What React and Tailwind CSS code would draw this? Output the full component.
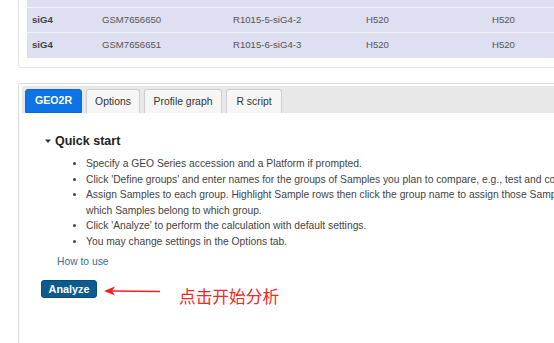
import React from 'react'

const rows = [
  ['siG4', 'GSM7656650', 'R1015-5-siG4-2', 'H520', 'H520'],
  ['siG4', 'GSM7656651', 'R1015-6-siG4-3', 'H520', 'H520'],
]

const tabs = [
  { label: 'Options', w: 'w-[54px]' },
  { label: 'Profile graph', w: 'w-[78px]' },
  { label: 'R script', w: 'w-[56px]' },
]

export default function App() {
  return (
    <div
      className="w-[554px] h-[343px] overflow-hidden bg-white"
      style={{ fontFamily: '"Liberation Sans", Arial, sans-serif' }}
    >
      {/* Sample table card */}
      <div className="ml-[18px] w-[560px] mt-[-4px] border border-[#e2e2e2] rounded-[3px] pl-[8px] pb-[9px] bg-white">
        <div className="w-[560px] bg-[#dfdff2]">
          <div className="h-[11px] border-b border-[#f3f3fb]" />
          {rows.map((r, i) => (
            <div
              key={i}
              className={`flex items-center h-[25px] text-[9.6px] text-[#555] ${i === 0 ? 'border-b border-[#f3f3fb]' : ''}`}
            >
              <span className="w-[75px] pl-[5px] font-bold text-[#444]">{r[0]}</span>
              <span className="w-[131px]">{r[1]}</span>
              <span className="w-[133px]">{r[2]}</span>
              <span className="w-[126px]">{r[3]}</span>
              <span>{r[4]}</span>
            </div>
          ))}
        </div>
      </div>

      {/* GEO2R panel */}
      <div className="ml-[18px] mt-[15px] w-[560px] h-[300px] border border-[#dcdcdc] rounded-[3px] pt-[2px] pl-[3px]">
        <div className="flex items-end gap-[4px] h-[27px] bg-[#e8e8e8] pl-[3px] rounded-tl-[2px]">
          <div className="h-[24px] w-[57px] flex items-center justify-center bg-[#0c74e4] border border-[#0c6ad0] rounded-t-[3px] text-white font-bold text-[10.6px]">
            GEO2R
          </div>
          {tabs.map((t) => (
            <div
              key={t.label}
              className={`h-[24px] ${t.w} flex items-center justify-center bg-[#f6f6f6] border border-[#cfcfcf] border-b-0 rounded-t-[3px] text-[#333] text-[10.4px]`}
            >
              {t.label}
            </div>
          ))}
        </div>

        <div className="pl-[22px] pt-[19px]">
          <div className="flex items-center gap-[4px] h-[18px] leading-[18px] text-[12.5px] font-bold text-[#222]">
            <svg width="6" height="6" viewBox="0 0 6 6" className="ml-[1px]">
              <polygon points="0,1.5 6,1.5 3,5" fill="#333" />
            </svg>
            Quick start
          </div>
          <ul className="mt-[6px] pl-[42px] text-[10.3px] leading-[15.5px] text-[#444] list-disc whitespace-nowrap">
            <li>Specify a GEO Series accession and a Platform if prompted.</li>
            <li>
              Click 'Define groups' and enter names for the groups of Samples you plan to compare, e.g., test and control.
            </li>
            <li>
              Assign Samples to each group. Highlight Sample rows then click the group name to assign those Samples to the group. Use the Columns menu to display Sample characteristics that help identify
              <br />
              which Samples belong to which group.
            </li>
            <li>Click 'Analyze' to perform the calculation with default settings.</li>
            <li>You may change settings in the Options tab.</li>
          </ul>
          <div className="mt-[6px] pl-[13px] h-[14px] leading-[14px] text-[10.3px] text-[#3d6a99]">
            How to use
          </div>
          <div className="mt-[11px] ml-[-3px] flex items-start">
            <button className="h-[18px] w-[56px] bg-[#0d5b8f] border border-[#0a4c78] rounded-[3px] text-white font-bold text-[10.8px] leading-none">
              Analyze
            </button>
            <svg width="60" height="12" viewBox="0 0 60 12" className="ml-[7px] mt-[5px]">
              <line x1="8" y1="6" x2="56" y2="6.5" stroke="#f02020" strokeWidth="1.5" />
              <polygon points="0,6 11,1.5 8,6 11,10.5" fill="#f02020" />
            </svg>
            <span
              className="ml-[15px] mt-[4px] h-[24px] leading-[24px] text-[16.7px] text-[#ee2a24]"
              style={{ fontFamily: '"Noto Sans CJK SC", sans-serif' }}
            >
              点击开始分析
            </span>
          </div>
        </div>
      </div>
    </div>
  )
}
